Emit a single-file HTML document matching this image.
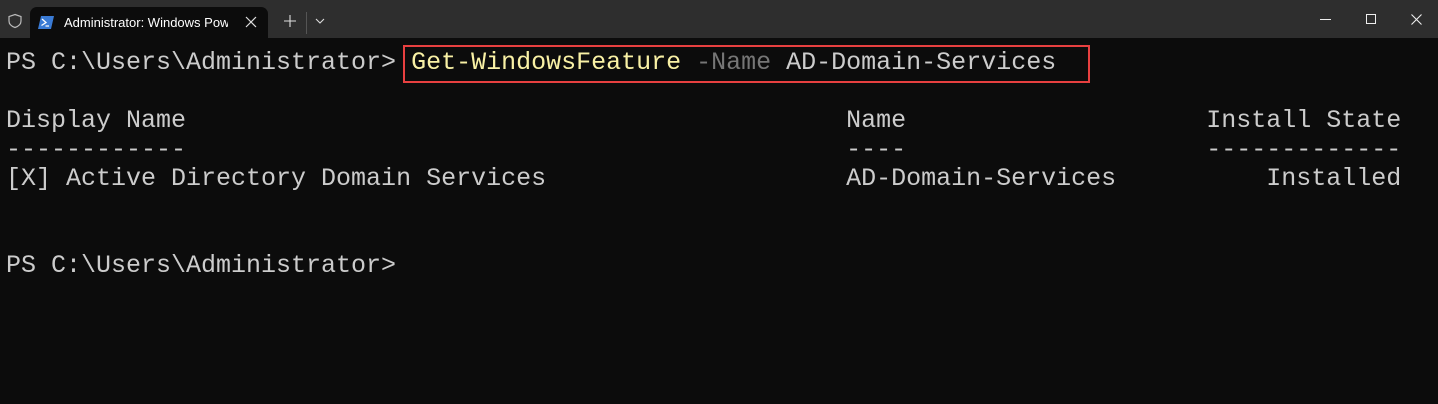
<!DOCTYPE html>
<html><head><style>
html,body{margin:0;padding:0;width:1438px;height:404px;overflow:hidden;background:#0c0c0c;}
#bar{position:absolute;left:0;top:0;width:1438px;height:38px;background:#2e2e2e;}
#tab{position:absolute;left:30px;top:7px;width:238px;height:31px;background:#0c0c0c;border-radius:7px 7px 0 0;}
#tab .t{position:absolute;left:34px;top:8px;font:13px "Liberation Sans",sans-serif;color:#fff;white-space:nowrap;width:164px;overflow:hidden;}
pre{position:absolute;left:6px;top:48px;margin:0;font:25px/29px "Liberation Mono",monospace;color:#cccccc;}
.y{color:#f9f1a5}.g{color:#767676}
#box{position:absolute;left:403px;top:45px;width:683px;height:34px;border:2.5px solid #e84040;}
</style></head><body>
<div id="bar">
<svg style="position:absolute;left:7px;top:13px" width="16" height="16" viewBox="0 0 16 16"><path d="M8 1.5 L14 3.5 V8 C14 11.5 11 13.5 8 14.5 C5 13.5 2 11.5 2 8 V3.5 Z" fill="none" stroke="#bbb" stroke-width="1.2"/></svg>
<div id="tab">
<svg style="position:absolute;left:8px;top:9px" width="16" height="13" viewBox="0 0 16 13"><path d="M3 0 H16 L13 13 H0 Z" fill="#3a7bd5"/><path d="M4 3 L8 6.5 L3.5 9.5" fill="none" stroke="#fff" stroke-width="1.3"/><path d="M7.5 10 H11" stroke="#fff" stroke-width="1.2"/></svg>
<div class="t">Administrator: Windows PowerShell</div>
<svg style="position:absolute;left:215px;top:9px" width="12" height="12" viewBox="0 0 12 12"><path d="M1 1 L11 11 M11 1 L1 11" stroke="#ddd" stroke-width="1.2"/></svg>
</div>
<svg style="position:absolute;left:284px;top:15px" width="12" height="12" viewBox="0 0 12 12"><path d="M6 0 V12 M0 6 H12" stroke="#ddd" stroke-width="1.1"/></svg>
<div style="position:absolute;left:306px;top:12px;width:1px;height:22px;background:#555"></div>
<svg style="position:absolute;left:315px;top:18px" width="10" height="6" viewBox="0 0 10 6"><path d="M1 1 L5 5 L9 1" fill="none" stroke="#ddd" stroke-width="1.1"/></svg>
<div style="position:absolute;left:1320px;top:19px;width:11px;height:1px;background:#eee"></div>
<div style="position:absolute;left:1366px;top:14px;width:8px;height:8px;border:1.2px solid #eee"></div>
<svg style="position:absolute;left:1411px;top:14px" width="11" height="11" viewBox="0 0 11 11"><path d="M0.5 0.5 L10.5 10.5 M10.5 0.5 L0.5 10.5" stroke="#eee" stroke-width="1.1"/></svg>
</div>
<pre>PS C:\Users\Administrator&gt; <span class="y">Get-WindowsFeature</span> <span class="g">-Name</span> AD-Domain-Services

Display Name                                            Name                    Install State
------------                                            ----                    -------------
[X] Active Directory Domain Services                    AD-Domain-Services          Installed


PS C:\Users\Administrator&gt;</pre>
<div id="box"></div>
</body></html>
